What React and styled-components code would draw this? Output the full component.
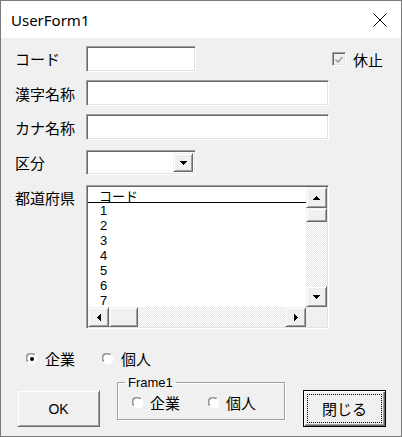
import React from 'react';
import styled, { createGlobalStyle, css } from 'styled-components';

const Global = createGlobalStyle`
  html, body { margin: 0; padding: 0; background: #fff; }
  body { font-family: "Noto Sans CJK JP", "Noto Sans", sans-serif; }
`;

// classic 3d edges
const sunken = css`
  background: #fff;
  border-style: solid;
  border-width: 1px;
  border-color: #a0a0a0 #fff #fff #a0a0a0;
  box-shadow: inset 1px 1px 0 #696969, inset -1px -1px 0 #e3e3e3;
`;

const raised = css`
  background: #f0f0f0;
  border-style: solid;
  border-width: 1px;
  border-color: #f0f0f0 #696969 #696969 #f0f0f0;
  box-shadow: inset 1px 1px 0 #fff, inset -1px -1px 0 #a0a0a0;
`;

const Window = styled.div`
  width: 402px;
  height: 437px;
  box-sizing: border-box;
  border: 1px solid #7a7a7a;
  display: flex;
  flex-direction: column;
  background: #f0f0f0;
`;

const TitleBar = styled.div`
  height: 37px;
  background: #fff;
  display: flex;
  align-items: center;
  justify-content: space-between;
  padding: 0 14px 0 10px;
  font-family: "Noto Sans", "Open Sans", sans-serif;
  font-size: 15px;
  color: #000;
`;

const Body = styled.div`
  flex: 1;
  display: flex;
  flex-direction: column;
  padding: 8px 0 0 14px;
  font-size: 15px;
  color: #000;
`;

const Row = styled.div`
  display: flex;
  align-items: ${p => (p.$top ? 'flex-start' : 'center')};
  margin-top: ${p => p.$mt || 0}px;
`;

const Label = styled.div`
  width: 71px;
  flex: none;
  line-height: 1;
  padding-top: ${p => p.$pt || 0}px;
  margin-top: ${p => p.$dy || 0}px;
`;

const TextBox = styled.div`
  ${sunken};
  box-sizing: border-box;
  width: ${p => p.$w}px;
  height: ${p => p.$h || 26}px;
`;

const Combo = styled.div`
  ${sunken};
  box-sizing: border-box;
  width: 110px;
  height: 25px;
  display: flex;
  justify-content: flex-end;
  padding: 2px;
`;

const DropBtn = styled.div`
  ${raised};
  box-sizing: border-box;
  width: 20px;
  height: 100%;
  display: flex;
  align-items: center;
  justify-content: center;
`;

const Check = styled.div`
  display: flex;
  align-items: center;
  margin-left: 136px;
  gap: 7px;
  line-height: 1;
`;

const CheckBox = styled.div`
  box-sizing: border-box;
  width: 14px;
  height: 14px;
  border-style: solid;
  border-width: 1px;
  border-color: #a0a0a0 #fff #fff #a0a0a0;
  box-shadow: inset 1px 1px 0 #696969, inset -1px -1px 0 #e3e3e3;
  background: #f0f0f0;
  display: flex;
  align-items: center;
  justify-content: center;
`;

const ListBox = styled.div`
  ${sunken};
  box-sizing: border-box;
  width: 243px;
  height: 144px;
  padding: 1px;
  display: grid;
  grid-template-columns: 1fr 21px;
  grid-template-rows: 1fr 20px;
`;

const ListArea = styled.div`
  background: #fff;
  overflow: hidden;
  font-family: "Liberation Sans", "Noto Sans CJK JP", sans-serif;
  font-size: 13px;
`;

const ListHead = styled.div`
  border-bottom: 1px solid #000;
  padding: 2px 0 0 11px;
  font-family: "Noto Sans CJK JP", sans-serif;
  font-size: 13px;
  line-height: 13px;
`;

const ListItem = styled.div`
  height: 15px;
  line-height: 15px;
  padding-left: 12px;
`;

const Track = styled.div`
  display: flex;
  flex-direction: ${p => (p.$h ? 'row' : 'column')};
  background: repeating-conic-gradient(#fff 0 25%, #e6e6e6 0 50%) 0 0 / 2px 2px;
`;

const SBtn = styled.div`
  ${raised};
  box-sizing: border-box;
  flex: none;
  width: ${p => p.$w}px;
  height: ${p => p.$h}px;
  display: flex;
  align-items: center;
  justify-content: center;
`;

const Spacer = styled.div`
  flex: 1;
`;

const Corner = styled.div`
  background: #f0f0f0;
`;

const RadioRow = styled.div`
  display: flex;
  align-items: center;
  margin-top: ${p => p.$mt || 0}px;
  padding-left: ${p => p.$pl || 0}px;
`;

const RadioItem = styled.label`
  display: flex;
  align-items: center;
  gap: ${p => p.$gap || 7}px;
  width: ${p => p.$w}px;
  line-height: 1;
`;

const BottomRow = styled.div`
  display: flex;
  align-items: flex-start;
  margin-top: 10px;
`;

const Button = styled.div`
  ${raised};
  box-sizing: border-box;
  width: 83px;
  height: 37px;
  margin-top: 14px;
  margin-left: ${p => p.$ml || 0}px;
  display: flex;
  align-items: center;
  justify-content: center;
  font-family: "Liberation Sans", sans-serif;
  font-size: 14px;
`;

const DefaultButton = styled(Button)`
  border: 1px solid #000;
  box-shadow: inset 1px 1px 0 #fff, inset -1px -1px 0 #696969, inset -2px -2px 0 #a0a0a0;
  padding: 3px;
  font-family: "Noto Sans CJK JP", sans-serif;
  font-size: 15px;
`;

const Focus = styled.div`
  flex: 1;
  align-self: stretch;
  display: flex;
  align-items: center;
  justify-content: center;
  border: 1px dotted #000;
`;

const Frame = styled.fieldset`
  box-sizing: border-box;
  width: 168px;
  height: 44px;
  margin: 0 0 0 17px;
  padding: 0 0 3px 14px;
  border: 1px solid #a0a0a0;
  box-shadow: 1px 1px 0 #fff, inset 1px 1px 0 #fff;
  display: flex;
  align-items: center;
`;

const Legend = styled.legend`
  padding: 0 3px;
  margin-left: -7px;
  font-family: "Liberation Sans", sans-serif;
  font-size: 13px;
  line-height: 13px;
`;

const Radio = ({ on }) => (
  <svg width="12" height="12" viewBox="0 0 12 12">
    <circle cx="6" cy="6" r="5.5" fill="#fff" />
    <path d="M1.2 9 A5.5 5.5 0 0 1 9 1.2" fill="none" stroke="#a0a0a0" strokeWidth="1" />
    <path d="M2 8.2 A4.3 4.3 0 0 1 8.2 2" fill="none" stroke="#696969" strokeWidth="1" />
    <path d="M10.8 3 A5.5 5.5 0 0 1 3 10.8" fill="none" stroke="#f0f0f0" strokeWidth="1" />
    {on && <circle cx="6" cy="6" r="2" fill="#000" />}
  </svg>
);

// pixel triangles drawn row by row
const Arrow = ({ dir }) => {
  const rows = [0, 1, 2, 3];
  if (dir === 'up' || dir === 'down') {
    return (
      <svg width="7" height="4" shapeRendering="crispEdges">
        {rows.map(i => (
          <rect key={i} x={i} y={dir === 'down' ? i : 3 - i} width={7 - 2 * i} height="1" fill="#000" />
        ))}
      </svg>
    );
  }
  return (
    <svg width="4" height="7" shapeRendering="crispEdges">
      {rows.map(i => (
        <rect key={i} y={i} x={dir === 'right' ? i : 3 - i} height={7 - 2 * i} width="1" fill="#000" />
      ))}
    </svg>
  );
};

export default function App() {
  return (
    <>
      <Global />
      <Window>
        <TitleBar>
          <span>UserForm1</span>
          <svg width="14" height="14" viewBox="0 0 14 14">
            <path d="M0.5 0.5 L13.5 13.5 M13.5 0.5 L0.5 13.5" stroke="#000" strokeWidth="1" />
          </svg>
        </TitleBar>
        <Body>
          <Row>
            <Label $dy={-2}>コード</Label>
            <TextBox $w={110} />
            <Check>
              <CheckBox>
                <svg width="8" height="7" viewBox="0 0 8 7">
                  <path d="M0.5 3.5 L3 6 L7.5 1" fill="none" stroke="#a0a0a0" strokeWidth="1.6" />
                </svg>
              </CheckBox>
              <span>休止</span>
            </Check>
          </Row>
          <Row $mt={8}>
            <Label>漢字名称</Label>
            <TextBox $w={243} />
          </Row>
          <Row $mt={8}>
            <Label>カナ名称</Label>
            <TextBox $w={243} />
          </Row>
          <Row $mt={10}>
            <Label>区分</Label>
            <Combo>
              <DropBtn>
                <Arrow dir="down" />
              </DropBtn>
            </Combo>
          </Row>
          <Row $mt={10} $top>
            <Label $pt={5}>都道府県</Label>
            <ListBox>
              <ListArea>
                <ListHead>コード</ListHead>
                {[1, 2, 3, 4, 5, 6, 7].map(n => (
                  <ListItem key={n}>{n}</ListItem>
                ))}
              </ListArea>
              <Track>
                <SBtn $w={21} $h={21}><Arrow dir="up" /></SBtn>
                <SBtn $w={21} $h={14} />
                <Spacer />
                <SBtn $w={21} $h={21}><Arrow dir="down" /></SBtn>
              </Track>
              <Track $h>
                <SBtn $w={21} $h={20}><Arrow dir="left" /></SBtn>
                <SBtn $w={29} $h={20} />
                <Spacer />
                <SBtn $w={21} $h={20}><Arrow dir="right" /></SBtn>
              </Track>
              <Corner />
            </ListBox>
          </Row>
          <RadioRow $mt={22} $pl={11}>
            <RadioItem $w={76}>
              <Radio on />
              <span>企業</span>
            </RadioItem>
            <RadioItem>
              <Radio />
              <span>個人</span>
            </RadioItem>
          </RadioRow>
          <BottomRow>
            <Button $ml={2}>OK</Button>
            <Frame>
              <Legend>Frame1</Legend>
              <RadioItem $w={76} $gap={6}>
                <Radio />
                <span>企業</span>
              </RadioItem>
              <RadioItem $gap={6}>
                <Radio />
                <span>個人</span>
              </RadioItem>
            </Frame>
            <DefaultButton $ml={18}>
              <Focus>閉じる</Focus>
            </DefaultButton>
          </BottomRow>
        </Body>
      </Window>
    </>
  );
}
